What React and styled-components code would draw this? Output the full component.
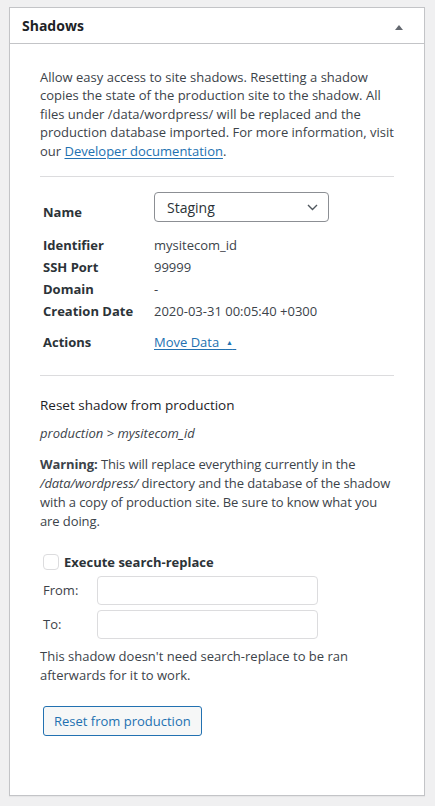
import React from "react";
import styled, { createGlobalStyle } from "styled-components";

const GlobalStyle = createGlobalStyle`
	body {
		margin: 0;
		background: #f0f0f1;
		color: #3c434a;
		font-family: "Open Sans", "Noto Sans", sans-serif;
		font-size: 13px;
	}
`;

const Page = styled.div`
	padding: 7px 10px 10px 9px;
`;

const Postbox = styled.div`
	background: #fff;
	border: 1px solid #c3c4c7;
	box-shadow: 0 1px 1px rgba(0, 0, 0, 0.04);
`;

const Header = styled.div`
	display: flex;
	align-items: center;
	justify-content: space-between;
	height: 35px;
	padding: 0 21px 0 12px;
	border-bottom: 1px solid #c3c4c7;
`;

const Title = styled.h2`
	margin: 0;
	font-size: 14px;
	font-weight: 700;
	color: #1d2327;
`;

const Caret = styled.span`
	width: 0;
	height: 0;
	margin-top: 4px;
	border-left: 4px solid transparent;
	border-right: 4px solid transparent;
	border-bottom: 5px solid #646970;
`;

const Inside = styled.div`
	padding: 24px 30px 59px;
`;

const Text = styled.p`
	margin: ${(p) => p.$margin || "0"};
	line-height: ${(p) => p.$lh || "18.4px"};
	letter-spacing: ${(p) => p.$ls || "normal"};
`;

const Link = styled.a`
	color: #2271b1;
	text-decoration: underline;
	text-decoration-thickness: 1px;
	text-underline-offset: 2px;
`;

const Rule = styled.hr`
	margin: ${(p) => p.$margin};
	border: 0;
	border-top: 1px solid #dcdcde;
`;

const Table = styled.div`
	display: grid;
	grid-template-columns: 111px 1fr;
	padding-left: 3px;
`;

const Label = styled.div`
	font-weight: 700;
	color: #2c3338;
	line-height: 22px;
	padding-top: ${(p) => p.$top || 0}px;
`;

const Value = styled.div`
	line-height: 22px;
	padding-top: ${(p) => p.$top || 0}px;
`;

const SelectBox = styled.div`
	display: flex;
	align-items: center;
	justify-content: space-between;
	box-sizing: border-box;
	width: 175px;
	height: 30px;
	padding: 0 10px 0 12px;
	border: 1px solid #8c8f94;
	border-radius: 4px;
	font-size: 14px;
	color: #2c3338;
	margin-bottom: 12px;
`;

const SmallArrow = styled.span`
	font-size: 7px;
	vertical-align: 2px;
`;

const Heading = styled.h3`
	margin: 0 0 8px;
	font-size: 13.5px;
	font-weight: 400;
	line-height: 20px;
	color: #1d2327;
`;

const Path = styled.em`
	display: block;
	line-height: 20px;
	margin-bottom: 12px;
`;

const Form = styled.div`
	padding-left: 3px;
	margin-top: 21px;
`;

const CheckRow = styled.label`
	display: flex;
	align-items: center;
	gap: 5px;
	font-weight: 700;
	color: #2c3338;
	margin-bottom: 5px;
`;

const Checkbox = styled.span`
	box-sizing: border-box;
	width: 16px;
	height: 16px;
	border: 1px solid #dcdcde;
	border-radius: 4px;
`;

const FieldRow = styled.div`
	display: grid;
	grid-template-columns: 54px 221px;
	align-items: center;
	margin-bottom: 5px;
`;

const Input = styled.input`
	box-sizing: border-box;
	height: 29px;
	border: 1px solid #dcdcde;
	border-radius: 4px;
	padding: 0 8px;
	font: inherit;
	outline: none;
`;

const Button = styled.button`
	margin-left: 3px;
	height: 30px;
	padding: 0 10px;
	border: 1px solid #2271b1;
	border-radius: 3px;
	background: #f6f7f7;
	color: #2271b1;
	font: inherit;
	font-size: 13px;
	cursor: pointer;
`;

const Chevron = () => (
	<svg width="11" height="7" viewBox="0 0 11 7" fill="none">
		<path d="M1 1l4.5 4.5L10 1" stroke="#50575e" strokeWidth="1.4" />
	</svg>
);

export default function App() {
	const rows = [
		["Identifier", "mysitecom_id"],
		["SSH Port", "99999"],
		["Domain", "-"],
		["Creation Date", "2020-03-31 00:05:40 +0300"],
	];

	return (
		<Page>
			<GlobalStyle />
			<Postbox>
				<Header>
					<Title>Shadows</Title>
					<Caret />
				</Header>
				<Inside>
					<Text>
						Allow easy access to site shadows. Resetting a shadow copies the
						state of the production site to the shadow. All files under
						/data/wordpress/ will be replaced and the production database
						imported. For more information, visit our{" "}
						<Link href="#">Developer documentation</Link>.
					</Text>
					<Rule $margin="16px 0 15px" />
					<Table>
						<Label $top={9}>Name</Label>
						<div>
							<SelectBox>
								Staging
								<Chevron />
							</SelectBox>
						</div>
						{rows.map(([k, v]) => (
							<React.Fragment key={k}>
								<Label>{k}</Label>
								<Value>{v}</Value>
							</React.Fragment>
						))}
						<Label $top={9}>Actions</Label>
						<Value $top={9}>
							<Link href="#">
								Move Data&nbsp;&nbsp;<SmallArrow>▲</SmallArrow>&nbsp;
							</Link>
						</Value>
					</Table>
					<Rule $margin="20.5px 0 19px" />
					<Heading>Reset shadow from production</Heading>
					<Path>production &gt; mysitecom_id</Path>
					<Text $lh="19.3px" $ls="-0.1px">
						<strong>Warning:</strong> This will replace everything currently in
						the <em>/data/wordpress/</em> directory and the database of the
						shadow with a copy of production site. Be sure to know what you are
						doing.
					</Text>
					<Form>
						<CheckRow>
							<Checkbox />
							Execute search-replace
						</CheckRow>
						<FieldRow>
							<span>From:</span>
							<Input />
						</FieldRow>
						<FieldRow>
							<span>To:</span>
							<Input />
						</FieldRow>
					</Form>
					<Text $lh="19px" $margin="8px 0 21px">
						This shadow doesn't need search-replace to be ran afterwards for it
						to work.
					</Text>
					<Button>Reset from production</Button>
				</Inside>
			</Postbox>
		</Page>
	);
}
